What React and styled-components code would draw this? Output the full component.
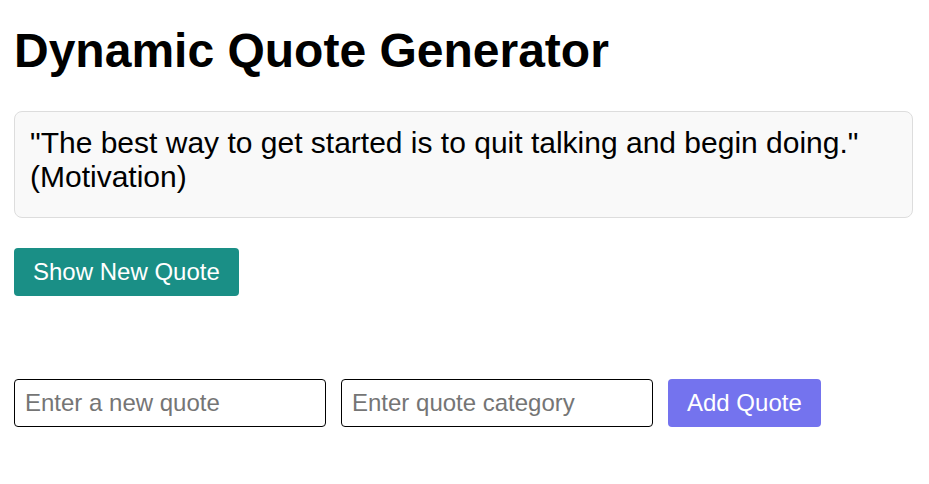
import React from 'react';
import styled, { createGlobalStyle } from 'styled-components';

const GlobalStyle = createGlobalStyle`
  body {
    margin: 0;
    background: #fff;
    font-family: "Liberation Sans", Arial, sans-serif;
    color: #000;
  }
`;

const Page = styled.div`
  padding: 0 16px 0 14px;
`;

const Title = styled.h1`
  margin: 23px 0 33px;
  font-size: 48px;
  font-weight: bold;
`;

const QuoteBox = styled.div`
  border: 1px solid #ddd;
  border-radius: 8px;
  background: #f9f9f9;
  padding: 14px 15px 23px;
  font-size: 30px;
  margin-bottom: 30px;
`;

const Button = styled.button`
  border: none;
  border-radius: 4px;
  padding: 10px 19px;
  font-family: inherit;
  font-size: 24px;
  color: #fff;
  background: ${({ $bg }) => $bg};
  cursor: pointer;
`;

const Form = styled.div`
  display: flex;
  align-items: center;
  gap: 15px;
  margin-top: 83px;
`;

const Input = styled.input`
  box-sizing: border-box;
  width: 312px;
  height: 48px;
  padding: 0 10px;
  border: 1px solid #000;
  border-radius: 4px;
  font-family: inherit;
  font-size: 24px;

  &::placeholder {
    color: #757575;
  }
`;

const App = () => (
  <Page>
    <GlobalStyle />
    <Title>Dynamic Quote Generator</Title>
    <QuoteBox>
      "The best way to get started is to quit talking and begin doing." (Motivation)
    </QuoteBox>
    <Button $bg="#1a8f86">Show New Quote</Button>
    <Form>
      <Input type="text" placeholder="Enter a new quote" />
      <Input type="text" placeholder="Enter quote category" />
      <Button $bg="#7473ee">Add Quote</Button>
    </Form>
  </Page>
);

export default App;
